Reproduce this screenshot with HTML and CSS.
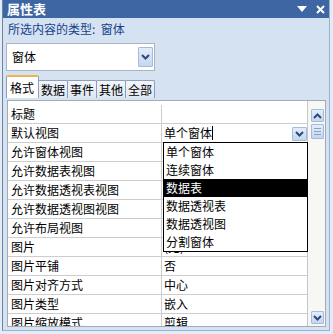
FILE: index.html
```html
<!DOCTYPE html>
<html lang="zh">
<head>
<meta charset="utf-8">
<link rel="stylesheet" href="styles.css">
</head>
<body>
<div class="panel">
  <div class="titlebar">
    <span class="title">属性表</span>
    <span class="tb-icons">
      <svg width="10" height="6" viewBox="0 0 10 6"><polygon points="0,0 10,0 5,6" fill="#fff"/></svg>
      <svg width="9" height="9" viewBox="0 0 9 9"><path d="M1 1 L8 8 M8 1 L1 8" stroke="#fff" stroke-width="2"/></svg>
    </span>
  </div>
  <div class="subtitle">所选内容的类型:&nbsp;&nbsp;窗体</div>
  <div class="combo">
    <span class="combo-text">窗体</span>
    <span class="btn combo-btn"><svg width="9" height="6" viewBox="0 0 9 6"><polyline points="1,1 4.5,4.5 8,1" fill="none" stroke="#2b4a7c" stroke-width="2"/></svg></span>
  </div>
  <div class="tabs">
    <span class="tab active">格式</span>
    <span class="tab">数据</span>
    <span class="tab">事件</span>
    <span class="tab">其他</span>
    <span class="tab">全部</span>
  </div>
  <div class="grid">
    <div class="table">
      <div class="row"><span class="lbl">标题</span><span class="val"></span></div>
      <div class="row"><span class="lbl">默认视图</span><span class="val edit">单个窗体<span class="caret"></span>
        <span class="btn cell-btn"><svg width="9" height="6" viewBox="0 0 9 6"><polyline points="1,1 4.5,4.5 8,1" fill="none" stroke="#2b4a7c" stroke-width="2"/></svg></span>
        <ul class="dropdown">
          <li>单个窗体</li>
          <li>连续窗体</li>
          <li class="sel">数据表</li>
          <li>数据透视表</li>
          <li>数据透视图</li>
          <li>分割窗体</li>
        </ul>
      </span></div>
      <div class="row"><span class="lbl">允许窗体视图</span><span class="val"></span></div>
      <div class="row"><span class="lbl">允许数据表视图</span><span class="val"></span></div>
      <div class="row"><span class="lbl">允许数据透视表视图</span><span class="val"></span></div>
      <div class="row"><span class="lbl">允许数据透视图视图</span><span class="val"></span></div>
      <div class="row"><span class="lbl">允许布局视图</span><span class="val"></span></div>
      <div class="row"><span class="lbl">图片</span><span class="val">(无)</span></div>
      <div class="row"><span class="lbl">图片平铺</span><span class="val">否</span></div>
      <div class="row"><span class="lbl">图片对齐方式</span><span class="val">中心</span></div>
      <div class="row"><span class="lbl">图片类型</span><span class="val">嵌入</span></div>
      <div class="row"><span class="lbl">图片缩放模式</span><span class="val">剪辑</span></div>
    </div>
    <div class="scrollbar">
      <span class="btn sb-btn"><svg width="9" height="6" viewBox="0 0 9 6"><polyline points="1,5 4.5,1.5 8,5" fill="none" stroke="#2b4a7c" stroke-width="2"/></svg></span>
      <span class="btn thumb"><svg width="7" height="7" viewBox="0 0 7 7"><path d="M0 0.5H7M0 3.5H7M0 6.5H7" stroke="#8aa4c8" stroke-width="1"/></svg></span>
      <span class="track"></span>
      <span class="btn sb-btn"><svg width="9" height="6" viewBox="0 0 9 6"><polyline points="1,1 4.5,4.5 8,1" fill="none" stroke="#2b4a7c" stroke-width="2"/></svg></span>
    </div>
  </div>
</div>
</body>
</html>
```

FILE: styles.css
```css
* { box-sizing: border-box; }
html, body { margin: 0; padding: 0; }
body {
  width: 333px;
  height: 334px;
  overflow: hidden;
  background: #e3ebf6;
  font-family: "Noto Sans CJK SC", "Noto Sans", sans-serif;
  font-size: 12px;
  color: #000;
}
.panel {
  margin-left: 2px;
  width: 328px;
  height: 331px;
  background: #d5e2f2;
  border-left: 1px solid #71849e;
  border-right: 1px solid #9bb2d2;
  border-bottom: 1px solid #9bb2d2;
  display: flex;
  flex-direction: column;
}
.titlebar {
  height: 18px;
  flex: none;
  background: #3d66a3;
  display: flex;
  align-items: center;
  justify-content: space-between;
  padding: 0 4px 0 4px;
}
.title {
  color: #fff;
  font-weight: bold;
  font-size: 13px;
  line-height: 18px;
}
.tb-icons {
  display: flex;
  align-items: center;
  gap: 9px;
}
.tb-icons svg { display: block; }
.subtitle {
  height: 25px;
  flex: none;
  padding: 2px 0 0 5px;
  line-height: 18px;
  color: #15428b;
}
.combo {
  flex: none;
  margin-left: 3px;
  width: 149px;
  height: 28px;
  background: #fff;
  border: 1px solid #abb4c0;
  display: flex;
  align-items: center;
  justify-content: space-between;
  padding: 0 1px 0 5px;
}
.combo-text { line-height: 18px; }
.btn {
  display: flex;
  align-items: center;
  justify-content: center;
  background: linear-gradient(#e4edf9, #c4d6ef);
  border: 1px solid #a3bbdc;
  border-radius: 1px;
}
.btn svg { display: block; }
.combo-btn { width: 15px; height: 20px; }
.tabs {
  flex: none;
  margin: 4px 0 0 3px;
  height: 23px;
  display: flex;
  align-items: flex-end;
}
.tab {
  height: 18px;
  line-height: 17px;
  padding: 0 2px;
  margin-right: -1px;
  background: linear-gradient(#f3f6fb, #dfe7f2);
  border: 1px solid #8b9fba;
  border-bottom: none;
  border-radius: 2px 2px 0 0;
}
.tab.active {
  height: 23px;
  padding: 2px 4px 0 3px;
  background: #fff;
  border-top: 2px solid #f2b451;
  line-height: 17px;
  position: relative;
  z-index: 1;
}
.grid {
  flex: none;
  margin: 2px 0 0 4px;
  width: 319px;
  height: 227px;
  background: #fff;
  border: 1px solid #a4abb5;
  display: flex;
  overflow: hidden;
}
.table {
  flex: 1;
  padding-top: 4px;
  border-right: 1px solid #c6c6c6;
}
.row {
  display: flex;
  height: 19px;
  border-bottom: 1px solid #cdcdcd;
}
.lbl {
  width: 154px;
  flex: none;
  padding-left: 3px;
  line-height: 18px;
  border-right: 1px solid #cdcdcd;
  white-space: nowrap;
}
.val {
  flex: 1;
  padding-left: 2px;
  line-height: 18px;
  white-space: nowrap;
}
.val.edit {
  position: relative;
  display: flex;
  align-items: center;
}
.caret {
  display: inline-block;
  width: 1px;
  height: 14px;
  background: #000;
}
.cell-btn {
  position: absolute;
  right: 0;
  top: 3px;
  width: 15px;
  height: 14px;
}
.dropdown {
  position: absolute;
  left: 1px;
  top: 18px;
  width: 145px;
  margin: 0;
  padding: 0;
  list-style: none;
  background: #fff;
  border: 1px solid #000;
  z-index: 5;
}
.dropdown li {
  height: 18px;
  line-height: 18px;
  padding-left: 2px;
}
.dropdown li.sel {
  background: #000;
  color: #fff;
}
.scrollbar {
  width: 17px;
  flex: none;
  background: #f7f7f4;
  display: flex;
  flex-direction: column;
  align-items: center;
  padding: 8px 0 2px 1px;
}
.sb-btn {
  width: 13px;
  height: 13px;
  flex: none;
}
.thumb {
  width: 13px;
  height: 15px;
  margin-top: 2px;
  flex: none;
}
.track { flex: 1; }
```
